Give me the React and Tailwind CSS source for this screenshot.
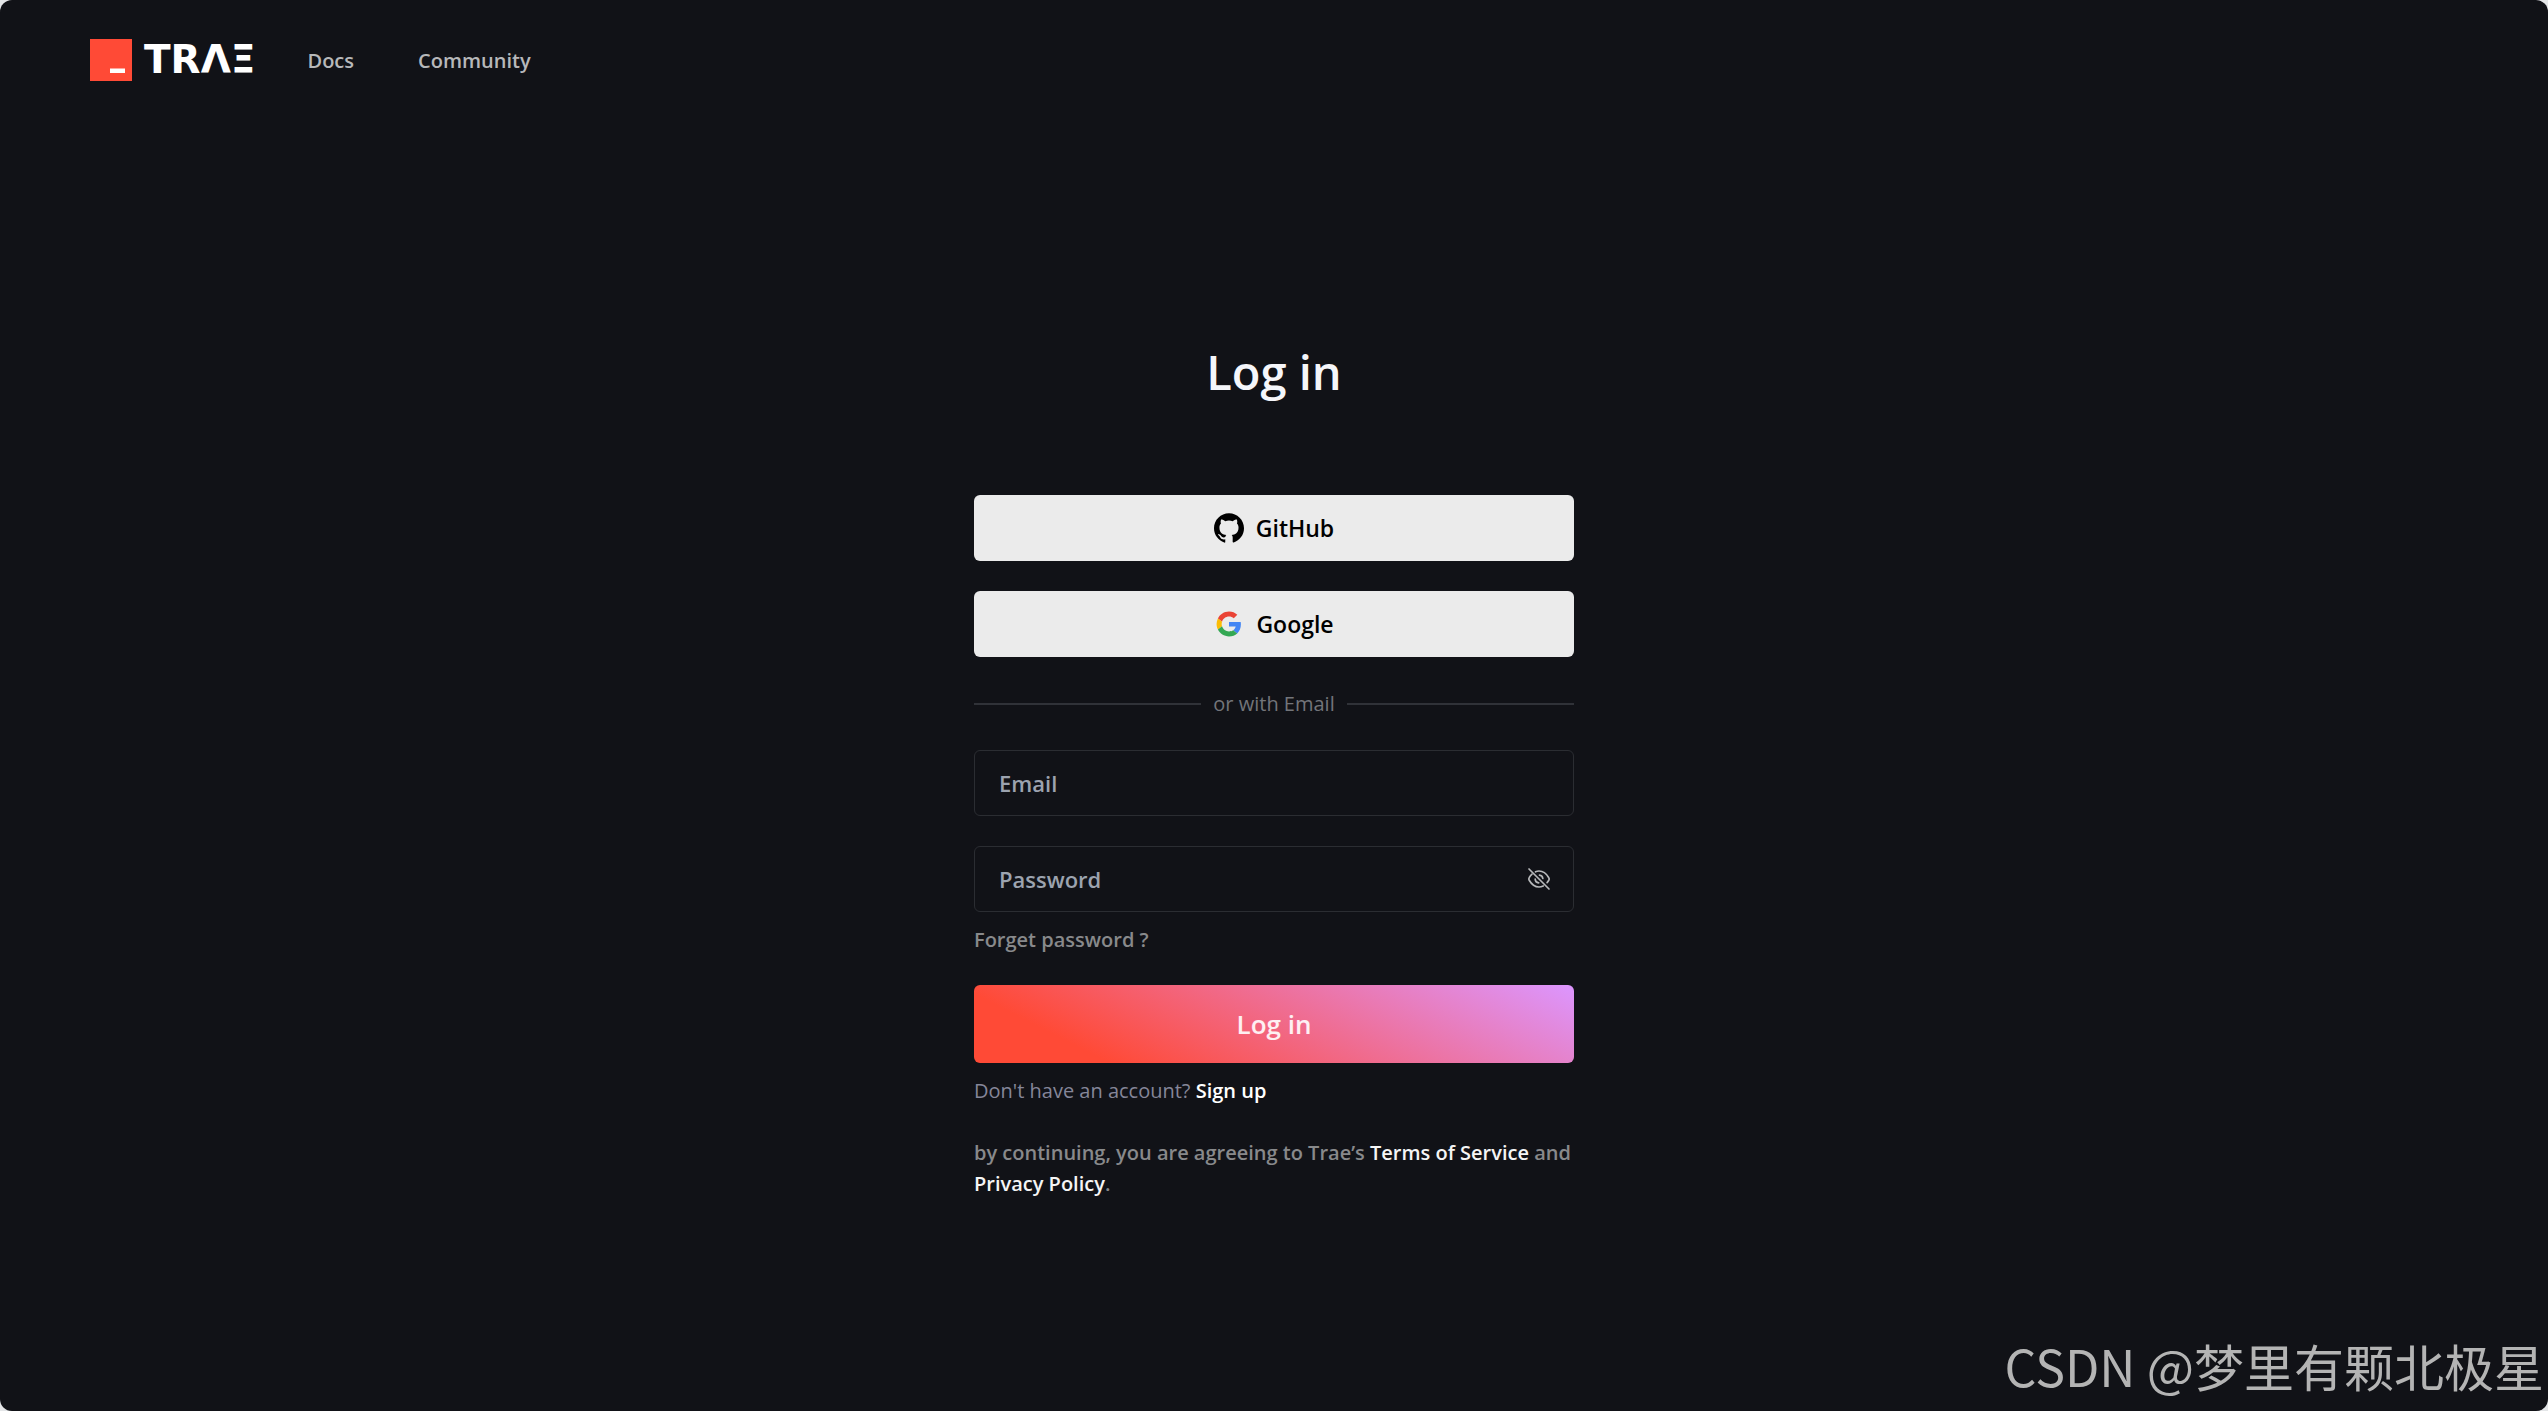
import React, { useState } from 'react';
import { SiGithub } from 'react-icons/si';

const navLinks = [
  { label: 'Docs', href: '#docs' },
  { label: 'Community', href: '#community' },
];

export default function App() {
  return (
    <div className="min-h-screen bg-[#e4e6e8]">
      <div className="relative min-h-screen flex flex-col bg-[#111217] rounded-xl overflow-hidden text-white font-semibold font-['Open_Sans','Noto_Sans',sans-serif]">
        <header className="flex items-center h-[120px] px-[90px]">
          <Logo />
          <nav className="flex items-center gap-16 ml-13 pt-0.5">
            {navLinks.map((l) => (
              <a key={l.label} href={l.href} className="text-xl text-[#b7b8ba] hover:text-white transition-colors">
                {l.label}
              </a>
            ))}
          </nav>
        </header>

        <main className="flex-1 flex flex-col items-center px-6 pt-[216px] pb-24">
          <LoginForm />
        </main>

        <Watermark />
      </div>
    </div>
  );
}

function LoginForm() {
  const [visible, setVisible] = useState(false);

  return (
    <form className="w-full max-w-[600px] flex flex-col" onSubmit={(e) => e.preventDefault()}>
      <h1 className="text-[47px] leading-[72px] text-center text-[#f5f6fa] mb-[87px]">Log in</h1>

      <div className="flex flex-col gap-[30px]">
        <SocialButton icon={<SiGithub size={30} />} label="GitHub" />
        <SocialButton icon={<GoogleIcon />} label="Google" />
      </div>

      <div className="flex items-center gap-3 h-[93px] text-xl font-medium text-[#73757a]">
        <span className="flex-1 h-0.5 bg-[#303238]" />
        or with Email
        <span className="flex-1 h-0.5 bg-[#303238]" />
      </div>

      <div className="flex flex-col gap-[30px]">
        <input
          type="email"
          aria-label="Email"
          placeholder="Email"
          className="h-[66px] px-6 rounded-md border border-[#2b2d32] bg-transparent text-[22px] placeholder:text-[#9ca3af] outline-none focus:border-[#55585f]"
        />
        <div className="flex items-center h-[66px] pl-6 pr-[22px] rounded-md border border-[#2b2d32] focus-within:border-[#55585f]">
          <input
            type={visible ? 'text' : 'password'}
            aria-label="Password"
            placeholder="Password"
            className="flex-1 min-w-0 bg-transparent text-[22px] placeholder:text-[#9ca3af] outline-none"
          />
          <button type="button" aria-label="Toggle password visibility" onClick={() => setVisible(!visible)}>
            <EyeOff />
          </button>
        </div>
      </div>

      <a href="#forgot" className="self-start mt-3 text-xl leading-8 text-[#88898b]">
        Forget password ?
      </a>

      <button
        type="submit"
        className="mt-[29px] h-[78px] rounded-md text-[26px] text-white/90 bg-[linear-gradient(27deg,#ff4a36_18%,#dc96ff_100%)]"
      >
        Log in
      </button>

      <p className="mt-3 text-xl leading-8 font-normal text-[#858699]">
        Don't have an account? <a href="#signup" className="font-semibold text-white">Sign up</a>
      </p>

      <p className="mt-[30px] text-xl leading-[31px] text-[#88898b]">
        by continuing, you are agreeing to Trae’s{' '}
        <a href="#terms" className="text-[#f5f5f5]">Terms of Service</a> and{' '}
        <a href="#privacy" className="text-[#f5f5f5]">Privacy Policy</a>.
      </p>
    </form>
  );
}

function SocialButton({ icon, label }) {
  return (
    <button
      type="button"
      className="flex items-center justify-center gap-3 h-[66px] rounded-md bg-[#ebebeb] text-[23px] text-black hover:bg-white transition-colors"
    >
      {icon}
      {label}
    </button>
  );
}

function Logo() {
  return (
    <a href="#home" aria-label="TRAE" className="flex items-center gap-3">
      <svg width="42" height="42" viewBox="0 0 42 42" aria-hidden="true">
        <rect width="42" height="42" fill="#ff4a36" />
        <rect x="20" y="29.5" width="15" height="4.5" fill="#fff" />
      </svg>
      <span className="text-[39px] leading-[42px] font-bold font-['DejaVu_Sans',sans-serif]">TRΛΞ</span>
    </a>
  );
}

function GoogleIcon() {
  return (
    <svg width="30" height="30" viewBox="-5 -5 58 58" aria-hidden="true">
      <path fill="#EA4335" d="M24 9.500c3.540 0 6.710 1.220 9.210 3.600l6.850-6.850C35.900 2.380 30.470 0 24 0 14.620 0 6.510 5.380 2.560 13.220l7.980 6.190C12.430 13.720 17.740 9.500 24 9.500z" />
      <path fill="#4285F4" d="M46.980 24.550c0-1.570-.15-3.090-.38-4.550H24v9.020h12.940c-.58 2.960-2.260 5.480-4.780 7.180l7.730 6c4.510-4.180 7.090-10.360 7.090-17.650z" />
      <path fill="#FBBC05" d="M10.530 28.590c-.48-1.450-.76-2.990-.76-4.590s.27-3.140.76-4.590l-7.980-6.190C.92 16.460 0 20.120 0 24c0 3.880.92 7.540 2.560 10.780l7.970-6.190z" />
      <path fill="#34A853" d="M24 48c6.480 0 11.930-2.130 15.890-5.810l-7.730-6c-2.150 1.450-4.920 2.300-8.160 2.300-6.260 0-11.570-4.220-13.470-9.910l-7.980 6.190C6.510 42.620 14.620 48 24 48z" />
    </svg>
  );
}

function EyeOff() {
  return (
    <svg width="24" height="24" viewBox="0 0 24 24" fill="none" stroke="#b7b8ba" strokeWidth="1.7" strokeLinecap="round">
      <path d="M2 2l20 20" />
      <path d="M8.500 4.800C9.600 4.300 10.800 4 12 4c4.400 0 7.700 3.100 9.800 6.700.5.800.5 1.800 0 2.600-.5.800-1 1.600-1.700 2.300" />
      <path d="M5 7.100c-1.100 1-2.100 2.300-2.800 3.600-.5.800-.5 1.800 0 2.600C4.300 16.900 7.600 20 12 20c1.500 0 2.900-.4 4.200-1" />
      <path d="M12.500 8.200c1.700.2 3.100 1.500 3.300 3.300" />
      <path d="M8.200 12.200c.1 1.900 1.600 3.500 3.500 3.700" />
    </svg>
  );
}

function Watermark() {
  return (
    <div className="absolute right-1 bottom-2.5 text-[50px] leading-[72px] font-normal text-[#b4b4b4] whitespace-nowrap font-['Noto_Sans_CJK_SC',sans-serif]">
      CSDN @梦里有颗北极星
    </div>
  );
}
